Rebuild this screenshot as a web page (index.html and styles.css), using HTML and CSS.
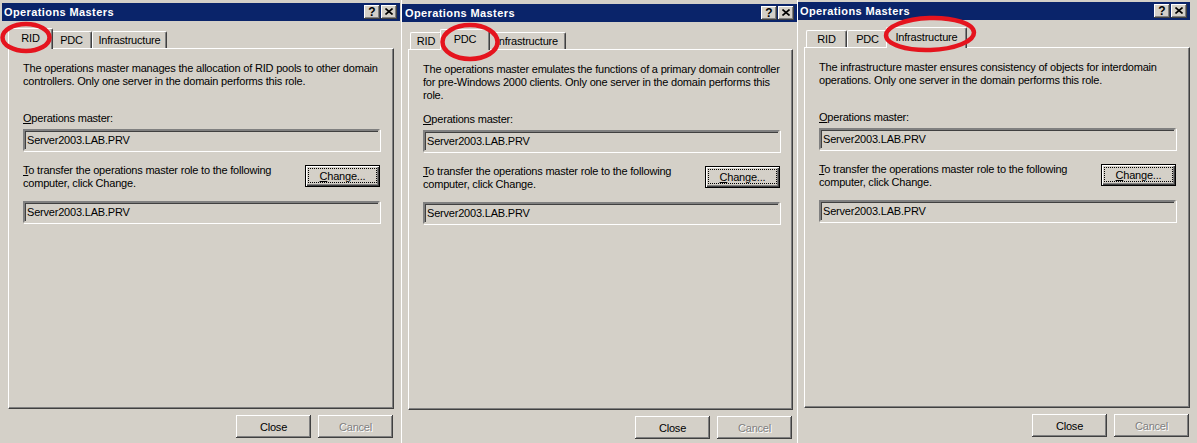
FILE: index.html
```html
<!DOCTYPE html>
<html>
<head>
<meta charset="utf-8">
<title>Operations Masters</title>
<link rel="stylesheet" href="styles.css">
</head>
<body>
<div class="screen">
  <div class="dlg d1">
    <div class="titlebar">
      <span class="title">Operations Masters</span>
      <span class="tbtns">
        <span class="tbtn q">?</span>
        <span class="tbtn"><svg width="8" height="7" viewBox="0 0 8 7"><path d="M0.5 0.5L7.5 6.5M7.5 0.5L0.5 6.5" stroke="#000" stroke-width="1.6" fill="none"/></svg></span>
      </span>
    </div>
    <div class="tabs">
      <div class="tab sel w-rid">RID</div>
      <div class="tab w-pdc">PDC</div>
      <div class="tab w-inf">Infrastructure</div>
    </div>
    <div class="panel">
      <p class="desc">The operations master manages the allocation of RID pools to other domain<br>controllers. Only one server in the domain performs this role.</p>
      <div class="label"><u>O</u>perations master:</div>
      <div class="field">Server2003.LAB.PRV</div>
      <div class="xfer">
        <div class="xtext"><u>T</u>o transfer the operations master role to the following<br>computer, click Change.</div>
        <button class="btn def"><u>C</u>hange...</button>
      </div>
      <div class="field f2">Server2003.LAB.PRV</div>
    </div>
    <div class="footer">
      <button class="btn">Close</button>
      <button class="btn dis">Cancel</button>
    </div>
  </div>

  <div class="dlg d2">
    <div class="titlebar">
      <span class="title">Operations Masters</span>
      <span class="tbtns">
        <span class="tbtn q">?</span>
        <span class="tbtn"><svg width="8" height="7" viewBox="0 0 8 7"><path d="M0.5 0.5L7.5 6.5M7.5 0.5L0.5 6.5" stroke="#000" stroke-width="1.6" fill="none"/></svg></span>
      </span>
    </div>
    <div class="tabs">
      <div class="tab w2-rid">RID</div>
      <div class="tab sel w2-pdc">PDC</div>
      <div class="tab w2-inf">Infrastructure</div>
    </div>
    <div class="panel">
      <p class="desc">The operations master emulates the functions of a primary domain controller<br>for pre-Windows 2000 clients. Only one server in the domain performs this<br>role.</p>
      <div class="label"><u>O</u>perations master:</div>
      <div class="field">Server2003.LAB.PRV</div>
      <div class="xfer">
        <div class="xtext"><u>T</u>o transfer the operations master role to the following<br>computer, click Change.</div>
        <button class="btn def"><u>C</u>hange...</button>
      </div>
      <div class="field f2">Server2003.LAB.PRV</div>
    </div>
    <div class="footer">
      <button class="btn">Close</button>
      <button class="btn dis">Cancel</button>
    </div>
  </div>

  <div class="dlg d3">
    <div class="titlebar">
      <span class="title">Operations Masters</span>
      <span class="tbtns">
        <span class="tbtn q">?</span>
        <span class="tbtn"><svg width="8" height="7" viewBox="0 0 8 7"><path d="M0.5 0.5L7.5 6.5M7.5 0.5L0.5 6.5" stroke="#000" stroke-width="1.6" fill="none"/></svg></span>
      </span>
    </div>
    <div class="tabs">
      <div class="tab w-rid">RID</div>
      <div class="tab w-pdc">PDC</div>
      <div class="tab sel w3-inf">Infrastructure</div>
    </div>
    <div class="panel">
      <p class="desc">The infrastructure master ensures consistency of objects for interdomain<br>operations. Only one server in the domain performs this role.</p>
      <div class="label"><u>O</u>perations master:</div>
      <div class="field">Server2003.LAB.PRV</div>
      <div class="xfer">
        <div class="xtext"><u>T</u>o transfer the operations master role to the following<br>computer, click Change.</div>
        <button class="btn def"><u>C</u>hange...</button>
      </div>
      <div class="field f2">Server2003.LAB.PRV</div>
    </div>
    <div class="footer">
      <button class="btn">Close</button>
      <button class="btn dis">Cancel</button>
    </div>
  </div>

  <svg class="marks" width="1197" height="443" viewBox="0 0 1197 443">
    <g fill="none" stroke="#e5141e" stroke-width="4.5">
      <ellipse cx="26" cy="37.5" rx="23.5" ry="13.5"/>
      <ellipse cx="470" cy="42" rx="27.5" ry="17"/>
      <ellipse cx="930" cy="34" rx="44" ry="16" transform="rotate(-2 930 34)"/>
    </g>
  </svg>
</div>
</body>
</html>
```

FILE: styles.css
```css
* { box-sizing: border-box; }
html, body { margin: 0; padding: 0; }
body {
  background: #d4d0c8;
  font-family: "Liberation Sans", Arial, sans-serif;
  font-size: 11px;
  color: #000;
  overflow: hidden;
}
.screen {
  position: relative;
  display: flex;
  width: 1197px;
  height: 443px;
  overflow: hidden;
}
.dlg {
  flex: none;
  display: flex;
  flex-direction: column;
  letter-spacing: -0.2px;
}
.d1 { width: 401px; padding-top: 3px; }
.d2 { width: 396px; padding-top: 4px; border-left: 1px solid #fff; }
.d3 { width: 400px; padding-top: 2px; border-left: 1px solid #fff; }

/* title bar */
.titlebar {
  height: 18px;
  background: #0a246a;
  display: flex;
  align-items: center;
  justify-content: space-between;
  padding: 0 3px 0 2px;
}
.d1 .titlebar { margin-left: 2px; margin-right: 1px; }
.d2 .titlebar { padding-left: 3px; }
.d3 .titlebar { margin-right: 7px; }
.title {
  color: #fff;
  font-weight: bold;
  letter-spacing: 0.4px;
  line-height: 18px;
  white-space: nowrap;
}
.tbtns { display: flex; gap: 1px; letter-spacing: 0; }
.tbtn {
  width: 16px;
  height: 14px;
  background: #d4d0c8;
  box-shadow: inset -1px -1px #404040, inset 1px 1px #fff, inset -2px -2px #808080;
  display: flex;
  align-items: center;
  justify-content: center;
  padding-bottom: 1px;
}
.tbtn.q {
  font-weight: bold;
  font-size: 12px;
  line-height: 12px;
  padding-bottom: 0;
}

/* tabs */
.tabs {
  position: relative;
  z-index: 2;
  height: 27px;
  display: flex;
  align-items: flex-end;
  padding-left: 2px;
}
.d1 .tabs, .d1 .panel, .d1 .footer { margin-left: 8px; }
.d2 .tabs, .d2 .panel, .d2 .footer { margin-left: 6px; }
.d3 .tabs, .d3 .panel, .d3 .footer { margin-left: 6px; }
.tab {
  flex: none;
  height: 17px;
  background: #d4d0c8;
  border-top: 1px solid #fff;
  border-left: 1px solid #fff;
  border-right: 1px solid #404040;
  border-radius: 2px 2px 0 0;
  box-shadow: inset -1px 0 #808080;
  text-align: center;
  line-height: 13px;
  padding-top: 2px;
  white-space: nowrap;
  overflow: hidden;
}
.tab.sel {
  position: relative;
  z-index: 3;
  height: 21px;
  margin: 0 -2px -1px;
  padding-top: 3px;
}
.w-rid { width: 41px; }
.w-pdc { width: 41px; }
.w-inf { width: 75px; }
.w2-rid { width: 32px; }
.w2-pdc { width: 46px; }
.w2-inf { width: 78px; }
.w3-inf { width: 77px; }
.tab.sel.w-rid { width: 45px; }
.tab.sel.w2-pdc { width: 50px; }
.tab.sel.w3-inf { width: 81px; }

/* panel */
.panel {
  position: relative;
  z-index: 1;
  width: 386px;
  height: 361px;
  border: 1px solid;
  border-color: #fff #404040 #404040 #fff;
  box-shadow: inset -1px -1px #808080;
  padding: 13px 12px 0 14px;
}
.d2 .panel { width: 385px; }
.desc {
  margin: 0;
  height: 39px;
  line-height: 13px;
  white-space: nowrap;
}
.label {
  margin-top: 11px;
  line-height: 13px;
}
.field {
  margin-top: 4px;
  width: 357px;
  height: 22px;
  border: 2px solid;
  border-color: #808080 #d4d0c8 #d4d0c8 #808080;
  box-shadow: inset 1px 1px #404040, 1px 1px #fff;
  padding: 0 2px;
  line-height: 18px;
  white-space: nowrap;
}
.field.f2 { margin-top: 11px; }
.xfer {
  margin-top: 13px;
  width: 357px;
  display: flex;
  justify-content: space-between;
  align-items: flex-start;
}
.xtext {
  line-height: 13px;
  white-space: nowrap;
}

/* buttons */
.btn {
  width: 75px;
  height: 23px;
  padding: 0;
  border: none;
  background: #d4d0c8;
  font: inherit;
  letter-spacing: inherit;
  color: #000;
  box-shadow: inset -1px -1px #404040, inset 1px 1px #fff, inset -2px -2px #808080;
  position: relative;
}
.btn.def {
  margin-top: 1px;
  height: 22px;
  box-shadow: inset 0 0 0 1px #000, inset 2px 2px #fff, inset -2px -2px #404040, inset -3px -3px #808080;
}
.btn.def::after {
  content: "";
  position: absolute;
  left: 3px;
  top: 3px;
  right: 3px;
  bottom: 4px;
  border: 1px dotted #000;
}
.btn.dis {
  color: #808080;
  text-shadow: 1px 1px #fff;
}
.footer {
  margin-top: 6px;
  width: 386px;
  display: flex;
  justify-content: flex-end;
  gap: 7px;
  padding-right: 1px;
}
.d2 .footer { width: 385px; }

/* overlay annotations */
.marks {
  position: absolute;
  left: 0;
  top: 0;
  pointer-events: none;
  z-index: 10;
}
```
